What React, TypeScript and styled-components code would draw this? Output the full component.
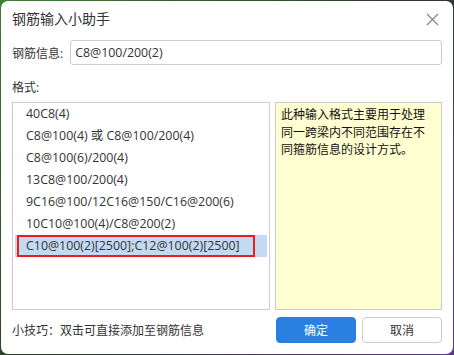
import React from "react";
import styled, { createGlobalStyle } from "styled-components";

const GlobalStyle = createGlobalStyle`
  html, body {
    margin: 0;
    padding: 0;
    width: 454px;
    height: 355px;
    overflow: hidden;
    background: linear-gradient(135deg, #3f7d34 0%, #2c3a2a 50%, #5a3a8c 100%);
    font-family: "Open Sans", "Noto Sans CJK SC", sans-serif;
  }
`;

const Dialog = styled.div`
  box-sizing: border-box;
  margin: 1px 0 0 1px;
  width: 452px;
  height: 353px;
  background: #fff;
  border-radius: 7px;
  padding: 0 11px;
  display: flex;
  flex-direction: column;
  color: #333;
  font-size: 12px;
`;

const Header = styled.div`
  height: 34px;
  display: flex;
  align-items: center;
  justify-content: space-between;
`;

const Title = styled.span`
  font-size: 14px;
  color: #333;
`;

const CloseButton = styled.button`
  border: none;
  background: transparent;
  padding: 0;
  width: 14px;
  height: 14px;
  margin-right: 3px;
  margin-top: 2px;
  display: flex;
  align-items: center;
  justify-content: center;
  cursor: pointer;
`;

const InfoRow = styled.div`
  margin-top: 5px;
  display: flex;
  align-items: center;
  gap: 7px;
`;

const Label = styled.span`
  font-size: 12px;
  color: #333;
  white-space: nowrap;
`;

const Input = styled.input`
  box-sizing: border-box;
  flex: 1;
  height: 25px;
  border: 1px solid #cccccc;
  border-radius: 3px;
  padding: 0 4px;
  font-family: inherit;
  font-size: 12.4px;
  color: #333;
  outline: none;
`;

const FormatLabel = styled.div`
  margin-top: 14px;
  line-height: 18px;
`;

const Content = styled.div`
  margin-top: 5px;
  height: 208px;
  display: grid;
  grid-template-columns: 258px 1fr;
  gap: 5px;
`;

const List = styled.div`
  box-sizing: border-box;
  position: relative;
  border: 1px solid #cccccc;
  padding: 0 2px;
`;

const Item = styled.div<{ $selected?: boolean }>`
  height: 22px;
  line-height: 22px;
  padding-left: 11px;
  font-size: 12.4px;
  white-space: nowrap;
  color: #333;
  background: ${(p) => (p.$selected ? "#c4daf2" : "transparent")};
  cursor: default;
`;

const Mark = styled.div`
  position: absolute;
  box-sizing: border-box;
  border: 2px solid #ee1c1c;
  left: 4px;
  top: 132px;
  width: 238px;
  height: 22px;
  pointer-events: none;
`;

const Note = styled.div`
  box-sizing: border-box;
  border: 1px solid #cccccc;
  background: #ffffd2;
  padding: 3px 5px;
  line-height: 17.5px;
  color: #111;
`;

const Footer = styled.div`
  margin-top: 7px;
  display: flex;
  align-items: center;
  justify-content: space-between;
`;

const Tip = styled.span`
  color: #333;
`;

const Buttons = styled.div`
  display: flex;
  gap: 6px;
`;

const Button = styled.button<{ $primary?: boolean }>`
  box-sizing: border-box;
  width: 80px;
  height: 26px;
  border-radius: 4px;
  font-family: inherit;
  font-size: 12px;
  cursor: pointer;
  border: 1px solid ${(p) => (p.$primary ? "#2b7fe0" : "#cccccc")};
  background: ${(p) => (p.$primary ? "#2b7fe0" : "#fff")};
  color: ${(p) => (p.$primary ? "#fff" : "#333")};
`;

const formats = [
  "40C8(4)",
  "C8@100(4) 或 C8@100/200(4)",
  "C8@100(6)/200(4)",
  "13C8@100/200(4)",
  "9C16@100/12C16@150/C16@200(6)",
  "10C10@100(4)/C8@200(2)",
  "C10@100(2)[2500];C12@100(2)[2500]",
];

const App = () => {
  const selected = 6;
  return (
    <>
      <GlobalStyle />
      <Dialog>
        <Header>
          <Title>钢筋输入小助手</Title>
          <CloseButton aria-label="关闭">
            <svg width="13" height="13" viewBox="0 0 13 13">
              <path d="M1 1L12 12M12 1L1 12" stroke="#8a8a8a" strokeWidth="1.3" />
            </svg>
          </CloseButton>
        </Header>
        <InfoRow>
          <Label>钢筋信息:</Label>
          <Input defaultValue="C8@100/200(2)" />
        </InfoRow>
        <FormatLabel>格式:</FormatLabel>
        <Content>
          <List>
            {formats.map((f, i) => (
              <Item key={f} $selected={i === selected}>
                {f}
              </Item>
            ))}
            <Mark />
          </List>
          <Note>此种输入格式主要用于处理同一跨梁内不同范围存在不同箍筋信息的设计方式。</Note>
        </Content>
        <Footer>
          <Tip>小技巧：双击可直接添加至钢筋信息</Tip>
          <Buttons>
            <Button $primary>确定</Button>
            <Button>取消</Button>
          </Buttons>
        </Footer>
      </Dialog>
    </>
  );
};

export default App;
